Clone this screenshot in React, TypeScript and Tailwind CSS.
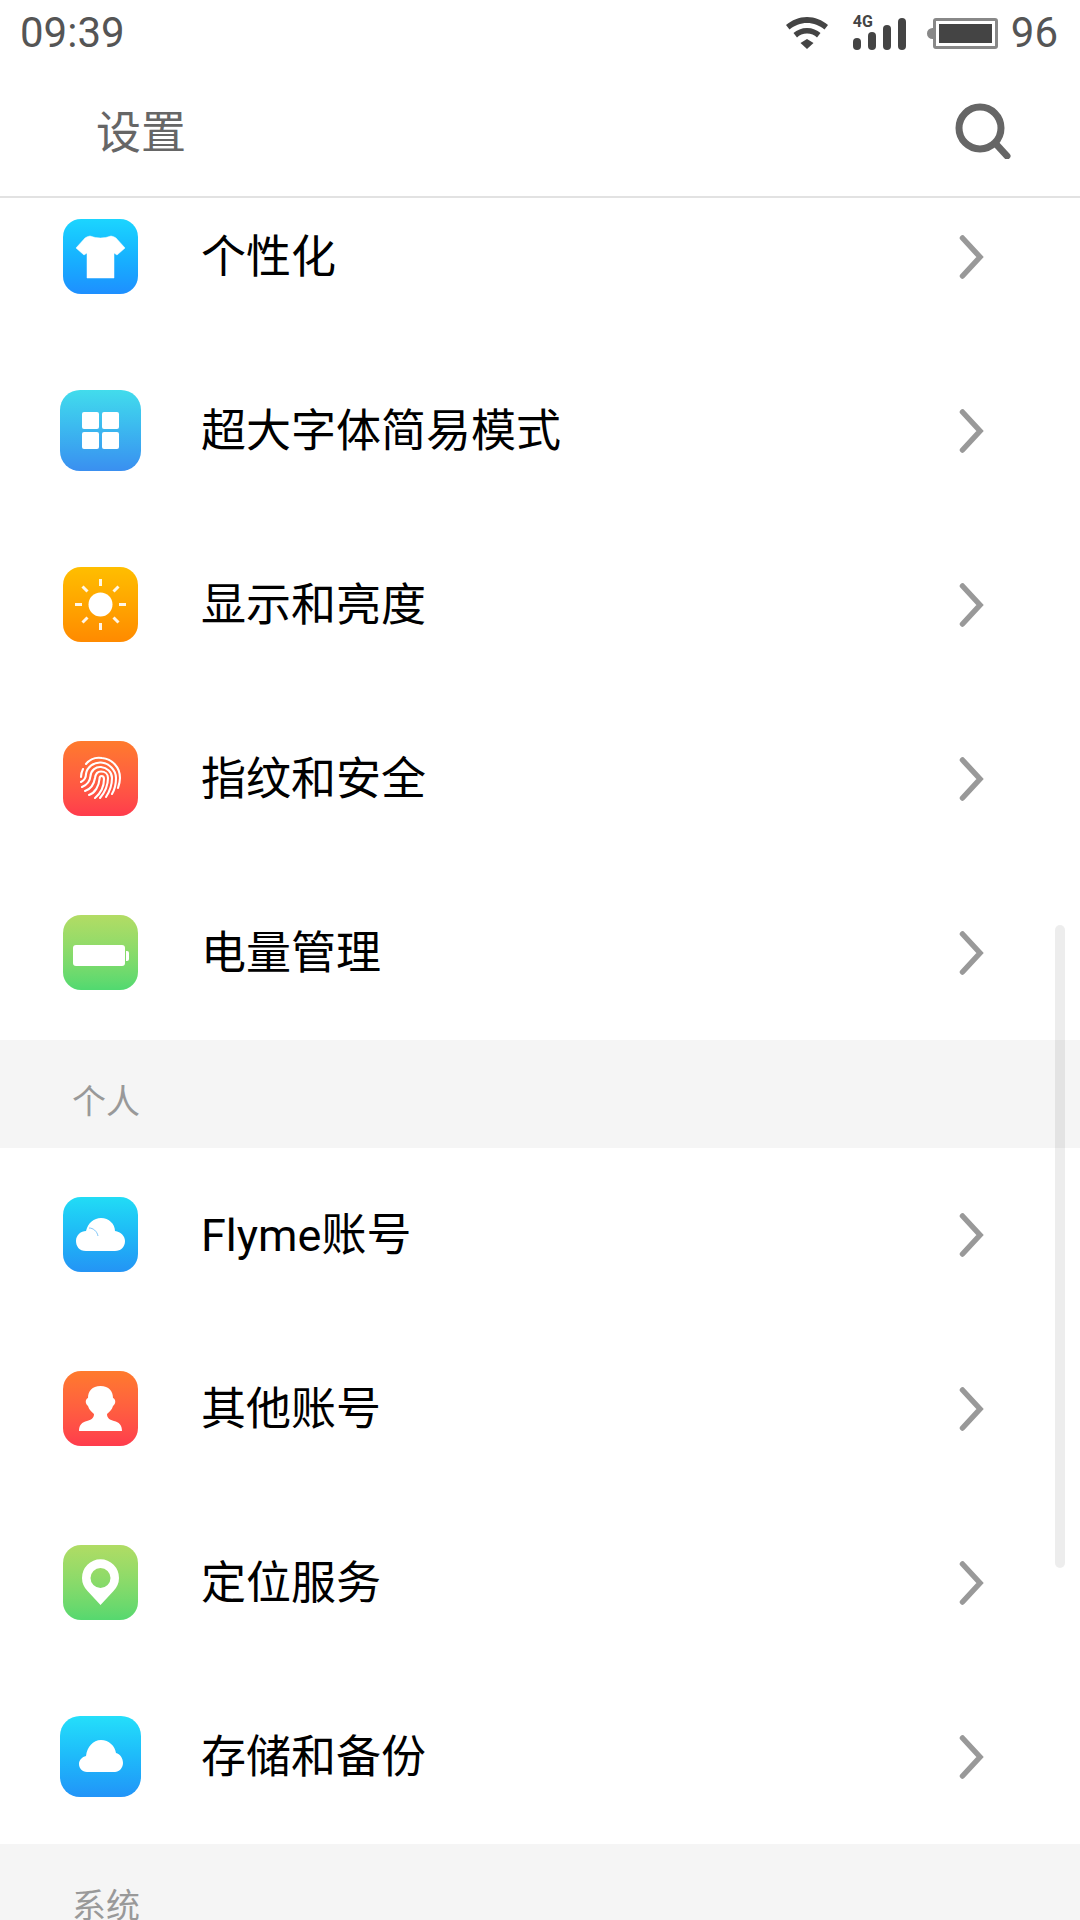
import type { ReactNode } from "react";

const FONT = "font-['Roboto','Noto_Sans_CJK_SC',sans-serif]";

interface Row {
    label: string;
    big?: boolean;
    gradient: string;
    icon: ReactNode;
}

const ShirtIcon = (
    <path d="M27 17 Q37.5 21 48 17 Q51 17.500 53 19 L62 29 L54 36 L51 34 V59 H24 V34 L21 36 L13 29 L22 19 Q24 17.500 27 17 Z" fill="#fff" strokeLinejoin="round" stroke="#fff" strokeWidth="0.5" />
);

const GridIcon = (
    <g fill="#fff">
        <rect x="22" y="22" width="17" height="17" rx="2" />
        <rect x="42" y="22" width="17" height="17" rx="2" />
        <rect x="22" y="42" width="17" height="17" rx="2" />
        <rect x="42" y="42" width="17" height="17" rx="2" />
    </g>
);

const SunIcon = (
    <g>
        <circle cx="37.5" cy="37.5" r="12" fill="#fff" />
        <g stroke="#fff" strokeWidth="3" opacity="0.9">
            <path d="M37.5 12 V19 M37.5 56 V63 M12 37.5 H19 M56 37.5 H63" />
            <path d="M19.5 19.5 L24.5 24.5 M50.5 50.5 L55.5 55.5 M19.5 55.5 L24.5 50.5 M50.5 24.5 L55.5 19.5" />
        </g>
    </g>
);

const FingerprintIcon = (
    <g fill="none" stroke="#fff" strokeWidth="2.1" strokeLinecap="round">
        <path d="M18 36 C18 33 19 30 20 28" />
        <path d="M23 23 C27 18 33 16 39 17 C49 18 57 26 57 37 C57 41 56 44 55 47" />
        <path d="M18 41 C22 39 23 36 23 33 C24 26 31 21 38 21.5 C46 22 53 29 53 37 C53 43 52 48 49 53" />
        <path d="M19 46 C24 44 27 40 27.500 35 C28 29 33 25.500 38 26 C44 26.500 49 31 49 37 C49 44 47 50 43 56" />
        <path d="M22 50 C28 48 31 43 32 37 C32.500 33 35 30.500 38 30.500 C42 30.500 45 33 45 37 C45 45 42 51 37 57" />
        <path d="M26 54 C32 52 36 45 36.500 38 C36.500 36 37 35 38.500 35 C40 35 41 36 41 38 C41 45 38 52 32 57" />
    </g>
);

const BatteryIcon = (
    <g fill="#fff">
        <rect x="10" y="30" width="52" height="21" rx="3" />
        <path d="M63 36 H64 Q66 36 66 38 V44 Q66 46 64 46 H63 Z" />
    </g>
);

const CloudIcon = (
    <g>
        <path d="M23 54 C16 54 13 49 13 44 C13 38 18 34 23 34 C25 26 31 21 38 21 C46 21 52 27 52 34 C58 35 62 39 62 44 C62 50 58 54 52 54 Z" fill="#fff" />
        <path d="M26 31 C30 31 34 34 35 39" fill="none" stroke="#5fb8f5" strokeWidth="0.8" />
    </g>
);

const PersonIcon = (
    <path d="M37.500 15 C46 15 50 20 50 27 C53 28 53 33 50 35 C49 39 46 41 44 43 C44 47 47 49 51 50 C56 51 59 54 59 60 H16 C16 54 19 51 24 50 C28 49 31 47 31 43 C29 41 26 39 25 35 C22 33 22 28 25 27 C25 20 29 15 37.500 15 Z" fill="#fff" />
);

const PinIcon = (
    <path fillRule="evenodd" d="M37.500 60 L24.500 46 A18.500 18.500 0 1 1 50.500 46 Z M37.500 23 A10 10 0 1 0 37.500 43 A10 10 0 1 0 37.500 23 Z" fill="#fff" />
);

const Cloud2Icon = (
    <path d="M27 56 C22 56 19 52 19 48 C19 44 22 41 26 40 C27 31 33 24 41 24 C49 24 55 30 56 37 C60 38 63 42 63 47 C63 52 59 56 55 56 Z" fill="#fff" />
);

const groupOne: Row[] = [
    { label: "个性化", gradient: "from-[#1cd5ff] to-[#1e8fff]", icon: ShirtIcon },
    { label: "超大字体简易模式", big: true, gradient: "from-[#42dcec] to-[#3a8ff0]", icon: GridIcon },
    { label: "显示和亮度", gradient: "from-[#ffbe00] to-[#ff8a00]", icon: SunIcon },
    { label: "指纹和安全", gradient: "from-[#ff7a2c] to-[#ff3b4c]", icon: FingerprintIcon },
    { label: "电量管理", gradient: "from-[#b2dc64] to-[#50d970]", icon: BatteryIcon },
];

const groupTwo: Row[] = [
    { label: "Flyme账号", gradient: "from-[#22dcf5] to-[#2494f5]", icon: CloudIcon },
    { label: "其他账号", gradient: "from-[#ff7a2c] to-[#ff3b4c]", icon: PersonIcon },
    { label: "定位服务", gradient: "from-[#b0dc64] to-[#55d86f]", icon: PinIcon },
    { label: "存储和备份", big: true, gradient: "from-[#25dffa] to-[#2294f8]", icon: Cloud2Icon },
];

function SettingRow({ row }: { row: Row }) {
    return (
        <div className="flex h-[174px] items-center">
            <div className="flex w-[201px] shrink-0 justify-center pb-[1px]">
                <div className={`bg-gradient-to-b ${row.gradient} ${row.big ? "h-[81px] w-[81px] rounded-[20px]" : "h-[75px] w-[75px] rounded-[18px]"}`}>
                    <svg viewBox={row.big ? "0 0 81 81" : "0 0 75 75"} className="h-full w-full">
                        {row.icon}
                    </svg>
                </div>
            </div>
            <span className="flex-1 text-[45px] leading-none text-black">{row.label}</span>
            <svg width="30" height="44" viewBox="0 0 30 44" className="mr-[96px]" fill="none" stroke="#999" strokeWidth="5.5" strokeLinecap="round">
                <path d="M8.500 3 L26 22 L8.500 41" strokeLinejoin="miter" />
            </svg>
        </div>
    );
}

function SectionHeader({ title }: { title: string }) {
    return (
        <div className="flex h-[108px] items-center bg-[#f5f5f5] pl-[72px] pt-[16px] text-[34px] leading-none text-[#999]">
            {title}
        </div>
    );
}

function StatusBar() {
    return (
        <div className="flex h-[66px] items-center justify-between pl-[20px] pr-[22px] text-[42px] leading-none text-[#555]">
            <span>09:39</span>
            <div className="flex items-center">
                <svg width="42" height="32" viewBox="0 0 42 32" fill="#444" className="mr-[25px]">
                    <path d="M21 0 C29 0 36 3 42 8 L38.500 12.500 C33.500 8.500 27.500 6 21 6 C14.500 6 8.500 8.500 3.500 12.500 L0 8 C6 3 13 0 21 0 Z" />
                    <path d="M21 11 C26.500 11 31 13 34.500 16 L31 20.500 C28.500 18 25 16.500 21 16.500 C17 16.500 13.500 18 11 20.500 L7.500 16 C11 13 15.500 11 21 11 Z" />
                    <path d="M21 22 L27.500 26 L21 32 L14.500 26 Z" />
                </svg>
                <div className="relative mr-[21px] h-[34px] w-[53px]">
                    <span className="absolute left-0 top-[-2px] text-[16px] font-bold leading-none text-[#444]">4G</span>
                    <div className="flex h-full items-end justify-between">
                        <div className="h-[12px] w-[8px] rounded-full bg-[#444]" />
                        <div className="h-[18px] w-[8px] rounded-full bg-[#444]" />
                        <div className="h-[25px] w-[8px] rounded-full bg-[#444]" />
                        <div className="h-[32px] w-[8px] rounded-full bg-[#444]" />
                    </div>
                </div>
                <div className="mr-[13px] flex items-center">
                    <div className="h-[11px] w-[6px] rounded-l-full bg-[#888]" />
                    <div className="h-[31px] w-[65px] rounded-[3px] border-[3px] border-[#888] bg-white p-[3px]">
                        <div className="h-full w-full bg-[#444]" />
                    </div>
                </div>
                <span>96</span>
            </div>
        </div>
    );
}

export default function App() {
    return (
        <div className={`relative h-[1920px] w-[1080px] overflow-hidden bg-white ${FONT}`}>
            <div className="relative z-10 bg-white">
                <StatusBar />
                <div className="flex h-[132px] items-center justify-between border-b-2 border-[#e2e2e2] pl-[96px] pr-[69px]">
                    <span className="pt-[4px] text-[45px] leading-none text-[#666]">设置</span>
                    <svg width="56" height="56" viewBox="0 0 56 56" fill="none" stroke="#666" strokeWidth="7" strokeLinecap="round">
                        <circle cx="25" cy="25" r="21" />
                        <path d="M41 41 L52 53" />
                    </svg>
                </div>
            </div>
            <div className="mt-[-28px]">
                {groupOne.map((row) => (
                    <SettingRow key={row.label} row={row} />
                ))}
                <SectionHeader title="个人" />
                {groupTwo.map((row) => (
                    <SettingRow key={row.label} row={row} />
                ))}
                <SectionHeader title="系统" />
            </div>
            {/* scrollbar */}
            <div className="absolute left-[1055px] top-[925px] h-[643px] w-[10px] rounded-full bg-black/[0.07]" />
        </div>
    );
}
